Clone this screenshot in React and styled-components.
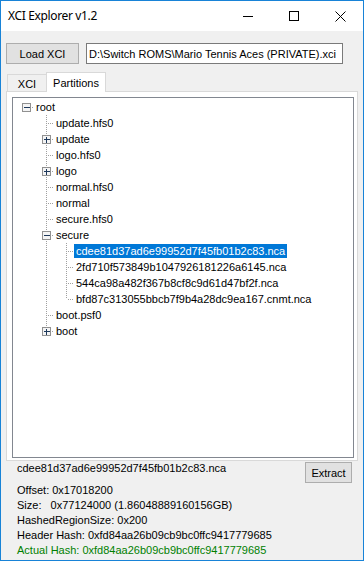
import React from "react";
import styled, { createGlobalStyle } from "styled-components";

const GlobalStyle = createGlobalStyle`
  html, body {
    margin: 0;
    padding: 0;
    background: #fff;
  }
  body {
    font-family: "Liberation Sans", Arial, sans-serif;
    font-size: 11px;
    color: #000;
  }
`;

const Window = styled.div`
  width: 364px;
  height: 561px;
  box-sizing: border-box;
  border: 1px solid #1883d7;
  display: flex;
  flex-direction: column;
  overflow: hidden;
`;

const TitleBar = styled.div`
  height: 30px;
  flex: none;
  background: #fff;
  display: flex;
  align-items: center;
`;

const Title = styled.div`
  padding-left: 7px;
  font-family: "Segoe UI", "Noto Sans", sans-serif;
  font-size: 12px;
  letter-spacing: -0.35px;
  line-height: 16px;
`;

const Controls = styled.div`
  margin-left: auto;
  display: flex;
  height: 30px;
`;

const ControlButton = styled.div`
  width: 46px;
  height: 30px;
  display: flex;
  align-items: center;
  justify-content: center;
`;

const Client = styled.div`
  flex: 1;
  background: #f0f0f0;
  display: flex;
  flex-direction: column;
`;

const TopRow = styled.div`
  display: flex;
  gap: 7px;
  margin: 12px 0 0 5px;
`;

const Button = styled.div`
  box-sizing: border-box;
  width: ${(p) => p.$width}px;
  height: 21px;
  border: 1px solid #adadad;
  background: #e1e1e1;
  display: flex;
  align-items: center;
  justify-content: center;
  font-size: 11px;
  margin-top: ${(p) => p.$top || 0}px;
`;

const PathBox = styled.div`
  box-sizing: border-box;
  width: 257px;
  height: 21px;
  border: 1px solid #7a7a7a;
  background: #fff;
  padding-left: 2px;
  display: flex;
  align-items: center;
  white-space: nowrap;
  overflow: hidden;
`;

const TabStrip = styled.div`
  display: flex;
  align-items: flex-end;
  height: 20px;
  margin: 8px 0 0 6px;
  position: relative;
  z-index: 1;
`;

const Tab = styled.div`
  box-sizing: border-box;
  width: ${(p) => p.$width}px;
  height: ${(p) => (p.$active ? 20 : 17)}px;
  margin-left: ${(p) => (p.$active ? -1 : 0)}px;
  margin-bottom: ${(p) => (p.$active ? 0 : 1)}px;
  border: 1px solid #d9d9d9;
  border-bottom: none;
  background: ${(p) => (p.$active ? "#fff" : "#f0f0f0")};
  display: flex;
  align-items: center;
  justify-content: center;
  padding-top: ${(p) => (p.$active ? 0 : 1)}px;
`;

const Panel = styled.div`
  box-sizing: border-box;
  height: 370px;
  margin: -1px 5px 0 5px;
  border: 1px solid #d9d9d9;
  background: #fff;
  padding: 5px 3px 2px 5px;
`;

const Tree = styled.div`
  box-sizing: border-box;
  height: 361px;
  border: 1px solid #828790;
  background: #fff;
  padding-top: 1px;
  overflow: hidden;
`;

const Row = styled.div`
  height: 16px;
  display: flex;
  align-items: center;
  white-space: nowrap;
`;

const Gutter = styled.svg`
  flex: none;
  display: block;
`;

const NodeLabel = styled.span`
  height: 14px;
  line-height: 14px;
  padding: 0 2px;
  background: ${(p) => (p.$selected ? "#0078d7" : "transparent")};
  color: ${(p) => (p.$selected ? "#fff" : "#000")};
`;

const BottomRow = styled.div`
  display: flex;
  justify-content: space-between;
  align-items: flex-start;
  margin: 0 11px 0 16px;
`;

const Line = styled.div`
  line-height: 15px;
  white-space: pre;
  color: ${(p) => p.$color || "#000"};
`;

const Info = styled.div`
  margin-left: 16px;
`;

const DOT = "#a0a0a0";

function TreeGutter({ level, guides, hasChildren, expanded, isLast, isRoot }) {
  const width = 3 + 20 * level + 18;
  const cx = 13.5 + 20 * level;
  return (
    <Gutter width={width} height={16} shapeRendering="crispEdges">
      {guides.map((on, c) =>
        on ? (
          <line
            key={c}
            x1={13.5 + 20 * c}
            y1={0}
            x2={13.5 + 20 * c}
            y2={16}
            stroke={DOT}
            strokeDasharray="1 1"
          />
        ) : null
      )}
      {!isRoot && (
        <line x1={cx} y1={0} x2={cx} y2={8} stroke={DOT} strokeDasharray="1 1" />
      )}
      {!isRoot && !isLast && (
        <line x1={cx} y1={8} x2={cx} y2={16} stroke={DOT} strokeDasharray="1 1" />
      )}
      <line x1={cx + 1} y1={8.5} x2={width} y2={8.5} stroke={DOT} strokeDasharray="1 1" />
      {hasChildren && (
        <g>
          <rect
            x={cx - 4}
            y={4.5}
            width={8}
            height={8}
            fill="#f4f4f4"
            stroke="#919191"
          />
          <line x1={cx - 2.5} y1={8.5} x2={cx + 3} y2={8.5} stroke="#1e395b" />
          {!expanded && (
            <line x1={cx} y1={6} x2={cx} y2={11.5} stroke="#1e395b" />
          )}
        </g>
      )}
    </Gutter>
  );
}

const selectedName = "cdee81d37ad6e99952d7f45fb01b2c83.nca";

const nodes = [
  { name: "root", level: 0, hasChildren: true, expanded: true, isRoot: true, isLast: true, guides: [] },
  { name: "update.hfs0", level: 1, guides: [false] },
  { name: "update", level: 1, hasChildren: true, guides: [false] },
  { name: "logo.hfs0", level: 1, guides: [false] },
  { name: "logo", level: 1, hasChildren: true, guides: [false] },
  { name: "normal.hfs0", level: 1, guides: [false] },
  { name: "normal", level: 1, guides: [false] },
  { name: "secure.hfs0", level: 1, guides: [false] },
  { name: "secure", level: 1, hasChildren: true, expanded: true, guides: [false] },
  { name: selectedName, level: 2, guides: [false, true], selected: true },
  { name: "2fd710f573849b1047926181226a6145.nca", level: 2, guides: [false, true] },
  { name: "544ca98a482f367b8cf8c9d61d47bf2f.nca", level: 2, guides: [false, true] },
  { name: "bfd87c313055bbcb7f9b4a28dc9ea167.cnmt.nca", level: 2, guides: [false, true], isLast: true },
  { name: "boot.psf0", level: 1, guides: [false] },
  { name: "boot", level: 1, hasChildren: true, guides: [false], isLast: true },
];

export default function App() {
  return (
    <>
      <GlobalStyle />
      <Window>
        <TitleBar>
          <Title>XCI Explorer v1.2</Title>
          <Controls>
            <ControlButton>
              <svg width="10" height="10" shapeRendering="crispEdges">
                <line x1="0" y1="5.5" x2="10" y2="5.5" stroke="#000" />
              </svg>
            </ControlButton>
            <ControlButton>
              <svg width="10" height="10" shapeRendering="crispEdges">
                <rect x="0.5" y="0.5" width="9" height="9" fill="none" stroke="#000" />
              </svg>
            </ControlButton>
            <ControlButton>
              <svg width="11" height="11">
                <path d="M0.5 0.5 L10.5 10.5 M10.5 0.5 L0.5 10.5" stroke="#000" strokeWidth="1" />
              </svg>
            </ControlButton>
          </Controls>
        </TitleBar>
        <Client>
          <TopRow>
            <Button $width={73}>Load XCI</Button>
            <PathBox>D:\Switch ROMS\Mario Tennis Aces (PRIVATE).xci</PathBox>
          </TopRow>
          <TabStrip>
            <Tab $width={40}>XCI</Tab>
            <Tab $width={60} $active>
              Partitions
            </Tab>
          </TabStrip>
          <Panel>
            <Tree>
              {nodes.map((n, i) => (
                <Row key={i}>
                  <TreeGutter
                    level={n.level}
                    guides={n.guides}
                    hasChildren={n.hasChildren}
                    expanded={n.expanded}
                    isLast={n.isLast}
                    isRoot={n.isRoot}
                  />
                  <NodeLabel $selected={n.selected}>{n.name}</NodeLabel>
                </Row>
              ))}
            </Tree>
          </Panel>
          <BottomRow>
            <Line>{selectedName}</Line>
            <Button $width={47} $top={1}>
              Extract
            </Button>
          </BottomRow>
          <Info>
            <Line>Offset: 0x17018200</Line>
            <Line>Size:   0x77124000 (1.86048889160156GB)</Line>
            <Line>HashedRegionSize: 0x200</Line>
            <Line>Header Hash: 0xfd84aa26b09cb9bc0ffc9417779685</Line>
            <Line $color="#008000">Actual Hash: 0xfd84aa26b09cb9bc0ffc9417779685</Line>
          </Info>
        </Client>
      </Window>
    </>
  );
}
